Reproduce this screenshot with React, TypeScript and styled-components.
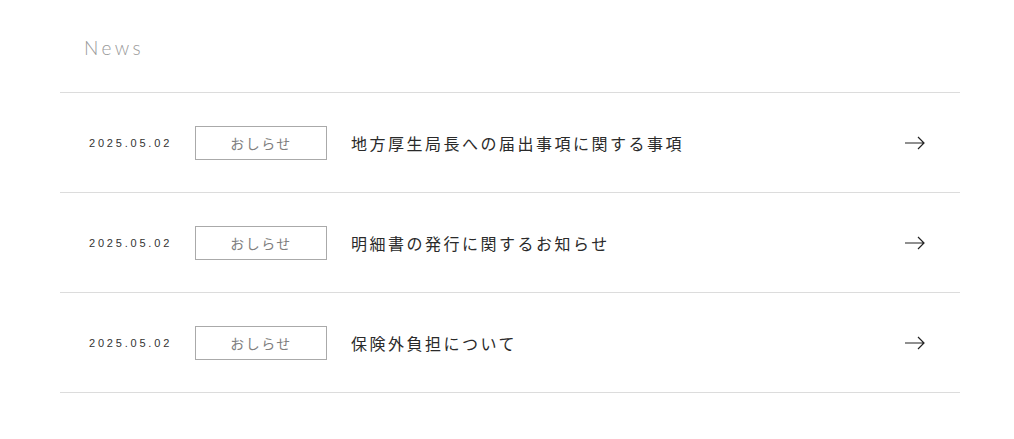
import styled, { createGlobalStyle } from "styled-components";

const GlobalStyle = createGlobalStyle`
  html, body {
    margin: 0;
    padding: 0;
    background: #fff;
  }
  body {
    font-family: "Noto Sans CJK JP", "Noto Sans", sans-serif;
    color: #333;
  }
`;

const Section = styled.section`
  width: 900px;
  margin-left: 60px;
  padding-top: 36px;
`;

const Heading = styled.h2`
  margin: 0 0 0 24px;
  height: 56px;
  font-family: "Lato", "Liberation Sans", sans-serif;
  font-weight: 300;
  font-size: 19px;
  line-height: 24px;
  letter-spacing: 3.4px;
  color: #999;
`;

const List = styled.ul`
  list-style: none;
  margin: 0;
  padding: 0;
  border-top: 1px solid #dcdcdc;
`;

const Row = styled.li`
  box-sizing: border-box;
  display: flex;
  align-items: center;
  height: 100px;
  padding: 0 35px 0 29px;
  border-bottom: 1px solid #dcdcdc;
  cursor: pointer;
`;

const Date = styled.time`
  width: 106px;
  flex-shrink: 0;
  font-family: "Liberation Sans", Arial, sans-serif;
  font-size: 11px;
  letter-spacing: 2.8px;
  color: #333;
`;

const Badge = styled.span`
  box-sizing: border-box;
  width: 132px;
  height: 34px;
  flex-shrink: 0;
  display: flex;
  align-items: center;
  justify-content: center;
  border: 1px solid #aaa;
  font-size: 14px;
  letter-spacing: 1.4px;
  color: #808080;
  margin-right: 24px;
`;

const Title = styled.span`
  flex: 1;
  font-size: 16px;
  letter-spacing: 2.5px;
  color: #2a2a2a;
`;

const Arrow = () => (
  <svg width="20" height="14" viewBox="0 0 20 14" fill="none">
    <path d="M0 7H19M13 1L19 7L13 13" stroke="#222" strokeWidth="1.2" />
  </svg>
);

const items = [
  { date: "2025.05.02", tag: "おしらせ", title: "地方厚生局長への届出事項に関する事項" },
  { date: "2025.05.02", tag: "おしらせ", title: "明細書の発行に関するお知らせ" },
  { date: "2025.05.02", tag: "おしらせ", title: "保険外負担について" },
];

export default function App() {
  return (
    <>
      <GlobalStyle />
      <Section>
        <Heading>News</Heading>
        <List>
          {items.map((item, i) => (
            <Row key={i}>
              <Date>{item.date}</Date>
              <Badge>{item.tag}</Badge>
              <Title>{item.title}</Title>
              <Arrow />
            </Row>
          ))}
        </List>
      </Section>
    </>
  );
}
